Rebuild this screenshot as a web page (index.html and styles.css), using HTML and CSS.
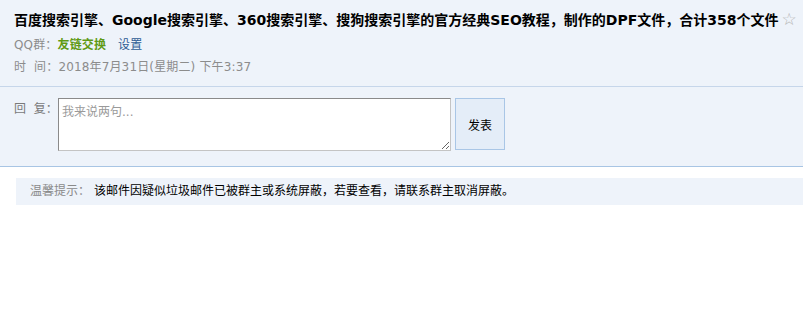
FILE: index.html
```html
<!DOCTYPE html>
<html lang="zh-CN">
<head>
<meta charset="utf-8">
<link rel="stylesheet" href="styles.css">
</head>
<body>
<div class="mail">
  <div class="head">
    <h1 class="title">百度搜索引擎、Google搜索引擎、360搜索引擎、搜狗搜索引擎的官方经典SEO教程，制作的DPF文件，合计358个文件<span class="star">☆</span></h1>
    <div class="meta">QQ群：<a class="grp">友链交换</a><a class="set">设置</a></div>
    <div class="meta">时&nbsp;&nbsp;间：2018年7月31日(星期二) 下午3:37</div>
  </div>
  <div class="reply">
    <span class="rlabel">回&nbsp;&nbsp;复：</span>
    <textarea class="rbox" placeholder="我来说两句..."></textarea>
    <button class="rbtn">发表</button>
  </div>
  <div class="notice"><span class="ntag">温馨提示：</span>该邮件因疑似垃圾邮件已被群主或系统屏蔽，若要查看，请联系群主取消屏蔽。</div>
</div>
</body>
</html>
```
FILE: styles.css
```css
html, body { margin: 0; padding: 0; background: #fff; }
body { font-family: "DejaVu Sans", "Noto Sans CJK SC", sans-serif; }
.mail { width: 803px; }
.head {
  background: #eef3fa;
  padding: 9px 14px 8px;
  border-bottom: 1px solid #c6d6ea;
}
.title {
  margin: 0;
  font-size: 14px;
  font-weight: bold;
  color: #000;
  line-height: 20px;
  white-space: nowrap;
}
.star { color: #b5b5b5; font-weight: normal; font-size: 17px; margin-left: 3px; font-family: "DejaVu Sans", sans-serif; }
.meta {
  font-size: 12px;
  color: #8c8c8c;
  line-height: 22px;
  letter-spacing: 0.15px;
}
.meta:first-of-type { margin-top: 4px; }
.grp { color: #5f9a14; font-weight: bold; text-decoration: none; }
.set { color: #2d5b94; margin-left: 12px; }
.reply {
  background: #eef3fa;
  display: flex;
  align-items: flex-start;
  padding: 11px 0 15px 14px;
  border-bottom: 1px solid #a8c5e4;
}
.rlabel { font-size: 12px; color: #7a7a7a; width: 44px; line-height: 20px; padding-top: 1px; }
.rbox {
  box-sizing: border-box;
  width: 393px;
  height: 53px;
  margin: 0;
  padding: 3px 3px;
  border: 1px solid;
  border-color: #8a8a8a #c4c4c4 #c4c4c4 #8a8a8a;
  font-family: "DejaVu Sans", "Noto Sans CJK SC", sans-serif;
  font-size: 12px;
  background: #fff;
  resize: both;
}
.rbox::placeholder { color: #9a9a9a; }
.rbtn {
  box-sizing: border-box;
  margin-left: 4px;
  width: 50px;
  height: 52px;
  background: #e4edf8;
  border: 1px solid #a9c6e6;
  font-family: "DejaVu Sans", "Noto Sans CJK SC", sans-serif;
  font-size: 12px;
  color: #000;
  padding: 0;
}
.notice {
  margin: 11px 0 0 16px;
  background: #eef3fa;
  height: 27px;
  line-height: 27px;
  padding-left: 14px;
  font-size: 12px;
  color: #000;
}
.ntag { color: #8a8a8a; margin-right: 4px; }
```
